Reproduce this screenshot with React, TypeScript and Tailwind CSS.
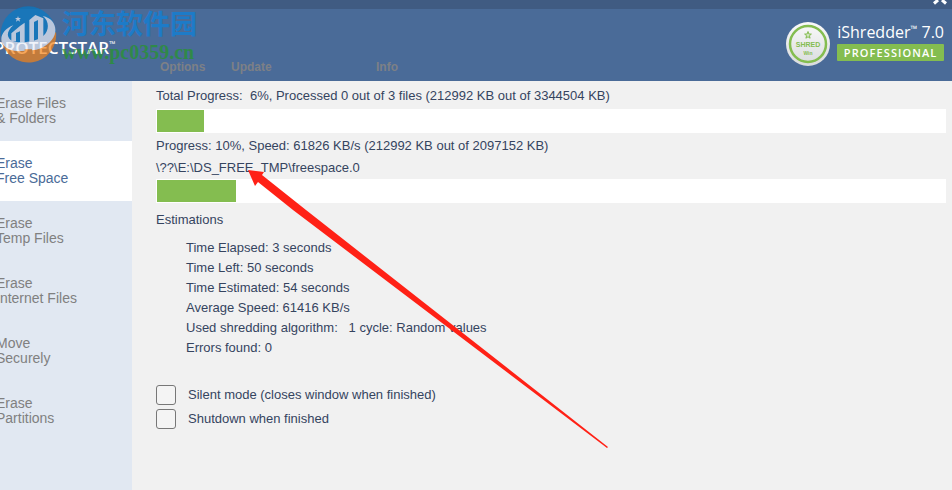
import { useState } from "react";
import clsx from "clsx";

const sections = [
  ["Erase Files", "& Folders"],
  ["Erase", "Free Space"],
  ["Erase", "Temp Files"],
  ["Erase", "Internet Files"],
  ["Move", "Securely"],
  ["Erase", "Partitions"],
];

const estimations = [
  "Time Elapsed: 3 seconds",
  "Time Left: 50 seconds",
  "Time Estimated: 54 seconds",
  "Average Speed: 61416 KB/s",
  "Used shredding algorithm:   1 cycle: Random values",
  "Errors found: 0",
];

function SiteLogo() {
  return (
    <svg width="58" height="64" viewBox="0 0 174 192" aria-hidden>
      <circle cx="85" cy="102" r="83" fill="#057bc7" />
      <path d="M4 120C50 150 130 150 168 95A83 83 0 0 1 4 120Z" fill="#f58216" />
      <g fill="#eaeef9">
        <path d="M40 76C12 86-4 112 8 132C20 152 50 156 74 152V148H96V151C132 147 156 126 164 104C172 78 158 54 128 48C148 62 148 90 132 106C112 126 54 134 32 120C18 108 22 92 40 76Z" />
        <path d="M34 100 60 78 74 68V126H60V94L48 99V124H34Z" />
        <path d="M88 60 106 45 130 55V118H114V60L102 66V128H88Z" />
        <path d="m54 48 2 6 7 0-5 4 2 7-6-4-6 4 2-7-5-4 7 0Z" />
      </g>
    </svg>
  );
}

function ShredBadge() {
  return (
    <svg width="46" height="46" viewBox="0 0 46 46" role="img" aria-label="Shred Win">
      <defs>
        <linearGradient id="badge" x1="0" y1="0" x2="0" y2="1">
          <stop offset="0" stopColor="#fafafa" />
          <stop offset="1" stopColor="#d9dbdd" />
        </linearGradient>
      </defs>
      <circle cx="23" cy="23" r="22" fill="url(#badge)" />
      <circle cx="23" cy="23" r="18" fill="none" stroke="#84bd50" strokeWidth="2.500" />
      <path
        d="m23 10.500.9 2.500 2.500.1-2 1.600.7 2.500-2.100-1.400-2.100 1.400.7-2.500-2-1.600 2.500-.1Z"
        fill="#d3e6c2"
        stroke="#84bd50"
      />
      <text x="23" y="26" textAnchor="middle" className="fill-[#84bd50] font-['Liberation_Sans',sans-serif] text-[7px] font-bold">
        SHRED
      </text>
      <text x="23" y="34" textAnchor="middle" className="fill-[#84bd50] font-['Liberation_Sans',sans-serif] text-[5px] font-bold">
        Win
      </text>
    </svg>
  );
}

function Header() {
  return (
    <header className="bg-[#4a6b98]">
      <div className="flex h-[9px] justify-end overflow-hidden bg-[#405b82] pr-1">
        <button type="button" aria-label="Close" className="h-[5px] w-4">
          <svg width="16" height="5" viewBox="0 0 16 5">
            <path d="M2 3.500 6 0M14 3.500 10 0" fill="none" stroke="#fff" strokeWidth="3" />
          </svg>
        </button>
      </div>
      <div className="relative flex h-[72px] items-start justify-between pr-2">
        <p className="-ml-[6px] mt-[27px] flex items-start font-['Open_Sans',sans-serif] text-[17px] leading-6 font-semibold text-white">
          PROTECTSTAR<span className="text-[8px] leading-4">™</span>
        </p>
        <nav className="absolute bottom-1 left-40 flex text-xs leading-5 font-bold text-[#7d8086]">
          <a href="#options" className="w-[71px]">Options</a>
          <a href="#update" className="w-[145px]">Update</a>
          <a href="#info">Info</a>
        </nav>
        <div className="mt-3 flex items-start gap-[6px]">
          <ShredBadge />
          <div>
            <p className="flex items-start font-['Open_Sans',sans-serif] text-base leading-[23px] text-white">
              iShredder<span className="text-[9px] leading-4">™</span>&nbsp;7.0
            </p>
            <p className="rounded-[1px] bg-[#84bd50] text-center font-['Open_Sans',sans-serif] text-[11px] leading-[17px] font-semibold tracking-widest text-white">
              PROFESSIONAL
            </p>
          </div>
        </div>
      </div>
    </header>
  );
}

function ProgressBar({ label, value }: { label: string; value: number }) {
  return (
    <div
      role="progressbar"
      aria-label={label}
      aria-valuenow={value}
      className="h-6 bg-white p-px"
    >
      <div className="h-full bg-[#84bd50]" style={{ width: `${value}%` }} />
    </div>
  );
}

function Option({ label }: { label: string }) {
  return (
    <label className="flex h-6 items-center gap-3">
      <input
        type="checkbox"
        className="size-5 appearance-none rounded-[3px] border border-[#777] bg-[#f4f4f4] checked:bg-[#84bd50]"
      />
      {label}
    </label>
  );
}

export default function App() {
  const [active, setActive] = useState(1);

  return (
    <div className="relative flex min-h-screen flex-col overflow-hidden bg-[#f1f1f1] font-['Liberation_Sans',Arial,sans-serif] text-[#35445f]">
      <Header />
      <div className="flex flex-1">
        <nav className="w-[132px] shrink-0 bg-[#e1e8f2]">
          {sections.map(([first, second], i) => (
            <button
              key={second}
              type="button"
              onClick={() => setActive(i)}
              className={clsx(
                "-ml-1 block h-[60px] w-[136px] text-left text-sm leading-[15px]",
                i === active ? "bg-white text-[#4a6b98]" : "text-[#808080]"
              )}
            >
              {first}
              <br />
              {second}
            </button>
          ))}
        </nav>

        <main className="min-w-0 flex-1 pt-[5px] pr-[6px] pl-6 text-[13px] leading-5">
          <p className="mb-[3px] whitespace-pre">
            {"Total Progress:  6%, Processed 0 out of 3 files (212992 KB out of 3344504 KB)"}
          </p>
          <ProgressBar label="Total progress" value={6} />
          <p className="mt-[3px]">
            Progress: 10%, Speed: 61826 KB/s (212992 KB out of 2097152 KB)
          </p>
          <p className="mt-[2px] mb-px">{"\\??\\E:\\DS_FREE_TMP\\freespace.0"}</p>
          <ProgressBar label="Current progress" value={10} />
          <h2 className="mt-[7px]">Estimations</h2>
          <ul className="mt-2 ml-[30px] whitespace-pre">
            {estimations.map((line) => (
              <li key={line}>{line}</li>
            ))}
          </ul>
          <div className="mt-[25px]">
            <Option label="Silent mode (closes window when finished)" />
            <Option label="Shutdown when finished" />
          </div>
        </main>
      </div>

      {/* Site watermark */}
      <div className="pointer-events-none absolute top-0 left-0 flex items-start opacity-70">
        <SiteLogo />
        <div className="mt-1 ml-1">
          <p className="font-['Noto_Sans_CJK_SC',sans-serif] text-[27px] leading-[38px] font-bold text-[#0a82dd]">
            河东软件园
          </p>
          <p className="font-['Liberation_Serif',serif] text-xl leading-5 font-bold text-[#259629]">
            www.pc0359.cn
          </p>
        </div>
      </div>

      {/* Pointer to the path being shredded */}
      <svg
        className="pointer-events-none absolute top-[168px] left-[246px]"
        width="364"
        height="282"
        viewBox="246 168 364 282"
        aria-hidden
      >
        <path d="M248 170 264 172 262 175 306 210 608 447 607 448 293 210 258 182 255 186Z" fill="#ff2116" />
      </svg>
    </div>
  );
}
